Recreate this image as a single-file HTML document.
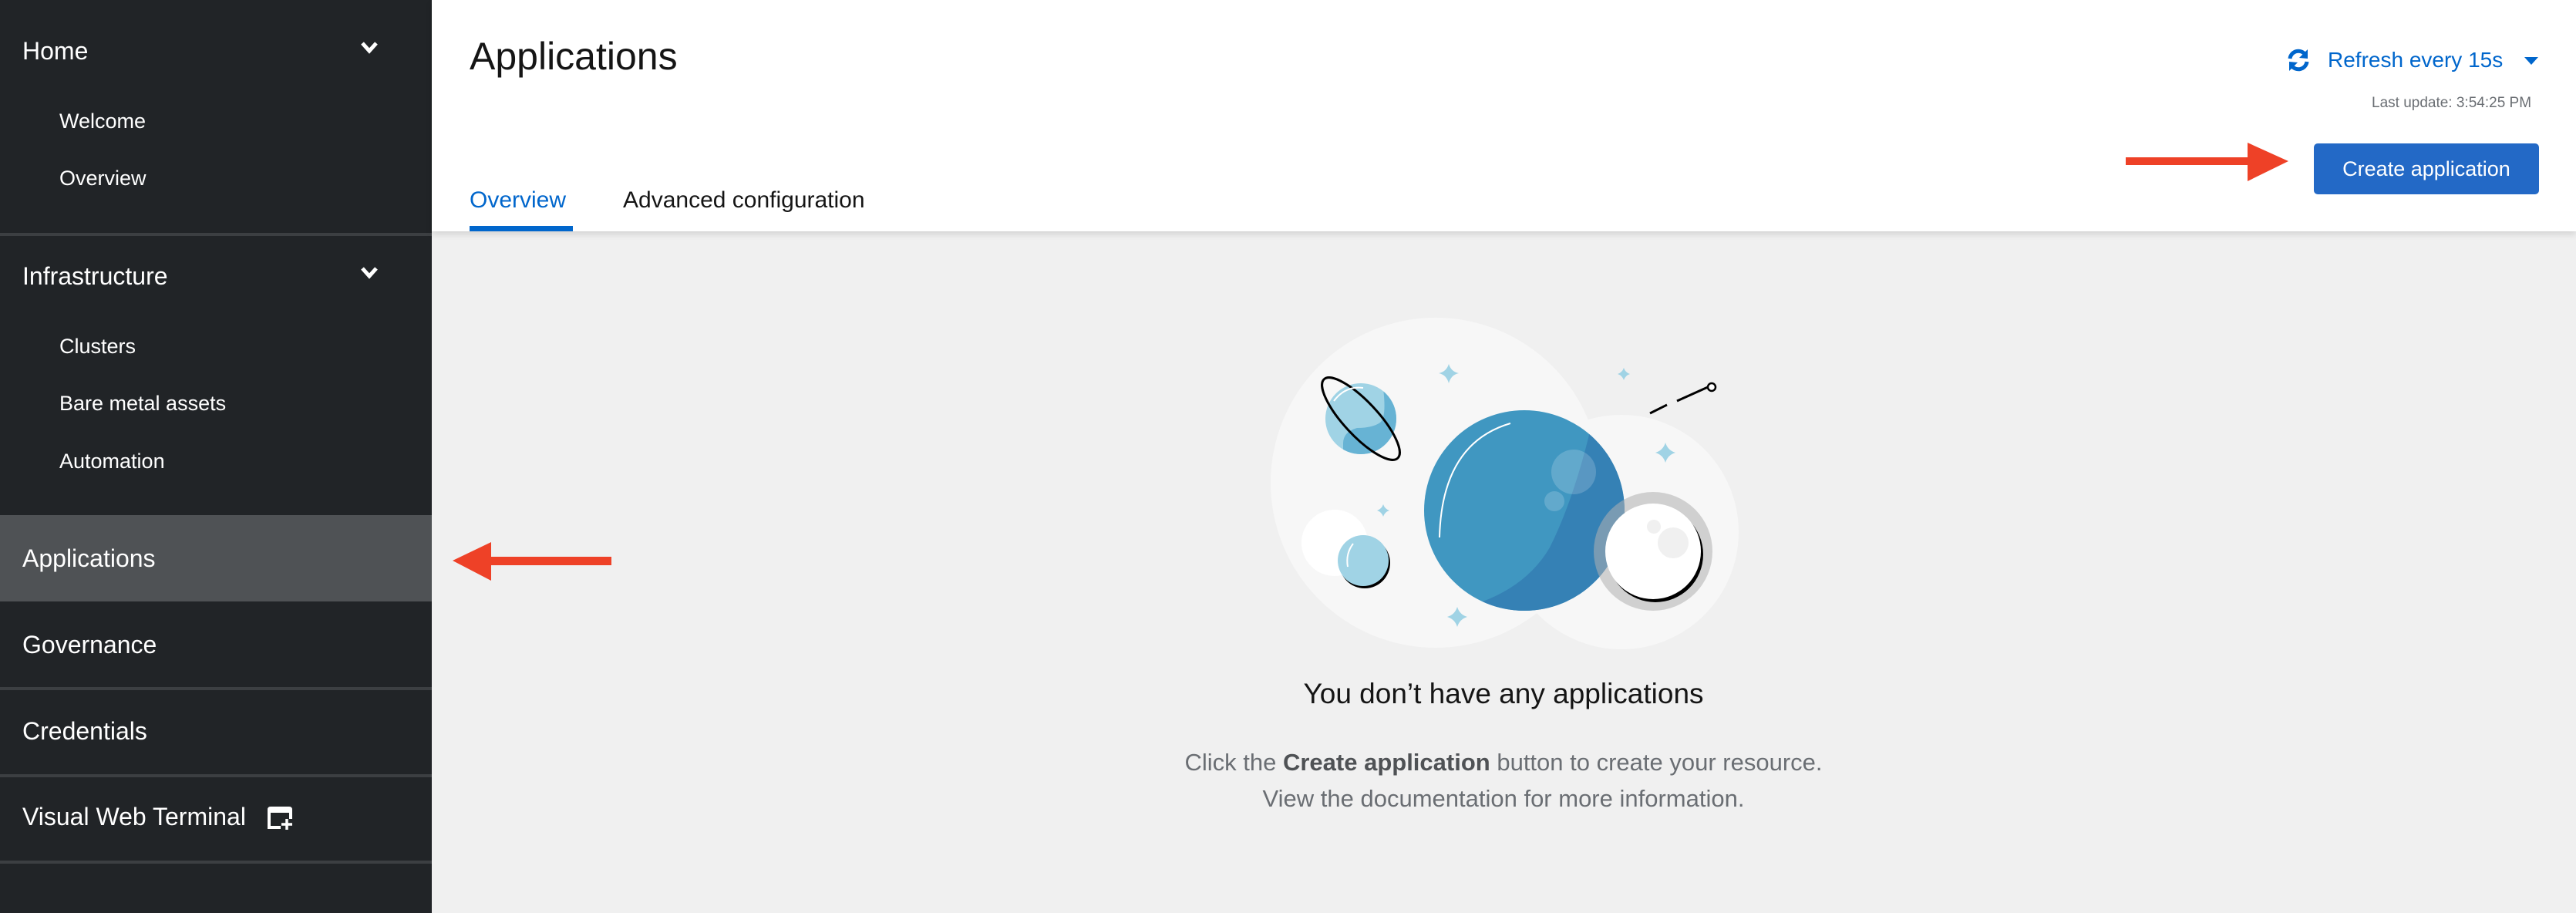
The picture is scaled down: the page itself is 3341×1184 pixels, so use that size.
<!DOCTYPE html>
<html><head><meta charset="utf-8"><style>
*{margin:0;padding:0;box-sizing:border-box}
body{width:3341px;height:1184px;overflow:hidden;background:#f0f0f0;font-family:"Liberation Sans",sans-serif;position:relative}
.sb{position:absolute;left:0;top:0;width:560px;height:1184px;background:#212427;color:#fff}
.t{position:absolute;white-space:nowrap;line-height:1}
.div{position:absolute;left:0;width:560px;height:4px;background:#3c3f42}
.hdr{position:absolute;left:560px;top:0;width:2781px;height:300px;background:#fff;box-shadow:0 4px 8px rgba(0,0,0,.12)}
</style></head><body>
<div class="sb">
  <div class="t" style="left:29px;top:50px;font-size:32px">Home</div>
  <svg style="position:absolute;left:467px;top:52px" width="24" height="20" viewBox="0 0 24 20"><path d="M3 4 L12 14 L21 4" stroke="#fff" stroke-width="5" fill="none"/></svg>
  <div class="t" style="left:77px;top:144px;font-size:27px">Welcome</div>
  <div class="t" style="left:77px;top:218px;font-size:27px">Overview</div>
  <div class="div" style="top:302px"></div>
  <div class="t" style="left:29px;top:342px;font-size:32px">Infrastructure</div>
  <svg style="position:absolute;left:467px;top:344px" width="24" height="20" viewBox="0 0 24 20"><path d="M3 4 L12 14 L21 4" stroke="#fff" stroke-width="5" fill="none"/></svg>
  <div class="t" style="left:77px;top:436px;font-size:27px">Clusters</div>
  <div class="t" style="left:77px;top:510px;font-size:27px">Bare metal assets</div>
  <div class="t" style="left:77px;top:585px;font-size:27px">Automation</div>
  <div style="position:absolute;left:0;top:668px;width:560px;height:112px;background:#4f5255"></div>
  <div class="t" style="left:29px;top:708px;font-size:32px">Applications</div>
  <div class="t" style="left:29px;top:820px;font-size:32px">Governance</div>
  <div class="div" style="top:891px"></div>
  <div class="t" style="left:29px;top:932px;font-size:32px">Credentials</div>
  <div class="div" style="top:1004px"></div>
  <div class="t" style="left:29px;top:1043px;font-size:32px">Visual Web Terminal</div>
  <svg style="position:absolute;left:346px;top:1046px" width="34" height="30" viewBox="0 0 34 30"><path d="M3 14 V4 Q3 2 5 2 H29 Q31 2 31 4 V16" stroke="#fff" stroke-width="4" fill="none"/><rect x="3" y="2" width="28" height="6" fill="#fff"/><path d="M3 12 V27 H18" stroke="#fff" stroke-width="4" fill="none"/><path d="M26 16 V30 M19 23 H33" stroke="#fff" stroke-width="3.5"/></svg>
  <div class="div" style="top:1116px"></div>
</div>
<svg style="position:absolute;left:585px;top:700px" width="210" height="56"><rect x="50" y="22" width="158" height="11" fill="#ee4127"/><polygon points="2,27 52,3 52,53" fill="#ee4127"/></svg>
<div class="hdr">
  <div class="t" style="left:49px;top:48px;font-size:50px;color:#151515">Applications</div>
  <div class="t" style="left:49px;top:245px;font-size:30px;color:#0066cc">Overview</div>
  <div style="position:absolute;left:49px;top:293px;width:134px;height:7px;background:#0066cc"></div>
  <div class="t" style="left:248px;top:245px;font-size:30px;color:#151515">Advanced configuration</div>
  <svg style="position:absolute;left:2405px;top:62px" width="32" height="32" viewBox="0 0 32 32"><path d="M5 14 A11 11 0 0 1 25 9" stroke="#0066cc" stroke-width="5" fill="none"/><polygon points="28,2 28,14 17,13" fill="#0066cc"/><path d="M27 18 A11 11 0 0 1 7 23" stroke="#0066cc" stroke-width="5" fill="none"/><polygon points="4,30 4,18 15,19" fill="#0066cc"/></svg>
  <div class="t" style="left:2459px;top:64px;font-size:28px;color:#0066cc">Refresh every 15s</div>
  <svg style="position:absolute;left:2713px;top:72px" width="20" height="14"><polygon points="1,2 19,2 10,12" fill="#0066cc"/></svg>
  <div class="t" style="left:2516px;top:124px;font-size:19px;color:#6a6e73">Last update: 3:54:25 PM</div>
  <svg style="position:absolute;left:2195px;top:184px" width="215" height="52"><rect x="2" y="20" width="160" height="10" fill="#ee4127"/><polygon points="160,1 213,25 160,51" fill="#ee4127"/></svg>
  <div style="position:absolute;left:2441px;top:186px;width:292px;height:66px;background:#2369c6;border-radius:5px;color:#fff;font-size:27px;line-height:66px;text-align:center">Create application</div>
</div>
<svg style="position:absolute;left:1600px;top:380px" width="700" height="480" viewBox="1600 380 700 480">
  <defs><clipPath id="pc"><circle cx="1977" cy="662" r="130"/></clipPath><clipPath id="sc"><circle cx="1765" cy="543" r="46"/></clipPath></defs>
  <circle cx="1862" cy="626" r="214" fill="#f7f7f7"/>
  <circle cx="2103" cy="690" r="152" fill="#f7f7f7"/>
  <circle cx="1731" cy="704" r="43" fill="#fff"/>
  <circle cx="1770" cy="730" r="33" fill="#000"/>
  <circle cx="1768" cy="727" r="33" fill="#a0d3e5"/>
  <path d="M1755 705 Q1745 718 1748 735" stroke="#fff" stroke-width="2" fill="none"/>
  <circle cx="1765" cy="543" r="46" fill="#a0d3e5"/>
  <path clip-path="url(#sc)" d="M1792 490 Q1800 540 1790 548 Q1780 555 1760 555 Q1742 560 1742 575 L1742 600 L1830 600 L1830 490Z" fill="#67b3d4"/>
  <ellipse cx="1765" cy="543" rx="70" ry="22" transform="rotate(47 1765 543)" fill="none" stroke="#000" stroke-width="3"/>
  <path d="M1730 520 Q1745 500 1768 503" stroke="#fff" stroke-width="2" fill="none"/>
  <circle cx="1977" cy="662" r="130" fill="#4097c1"/>
  <path clip-path="url(#sc2)" d="" />
  <g clip-path="url(#pc)"><path d="M2062 560 Q2040 650 2010 710 Q1975 770 1890 790 L1880 830 L2120 830 L2120 540Z" fill="#3581b5"/></g>
  <circle cx="2041" cy="612" r="29" fill="#fff" opacity=".18"/>
  <circle cx="2016" cy="650" r="13" fill="#fff" opacity=".18"/>
  <path d="M1959 549 Q1870 575 1867 697" stroke="#fff" stroke-width="2" fill="none"/>
  <circle cx="2144" cy="715" r="77" fill="#b0b0b0" opacity=".55"/>
  <circle cx="2147" cy="719" r="62" fill="#000"/>
  <circle cx="2144" cy="715" r="62" fill="#fff"/>
  <circle cx="2170" cy="704" r="20" fill="#f0f0f0"/>
  <circle cx="2145" cy="683" r="9" fill="#f0f0f0"/>
  <path d="M2140 536 L2162 525 M2175 520 L2215 502" stroke="#000" stroke-width="3"/>
  <circle cx="2220" cy="502" r="5" fill="#fff" stroke="#000" stroke-width="2.5"/>
  <g fill="#a0d3e5">
    <path d="M1879 472 Q1882 482 1892 484 Q1882 486 1879 497 Q1876 486 1866 484 Q1876 482 1879 472Z"/>
    <path d="M2106 477 Q2108 483 2114 485 Q2108 487 2106 493 Q2104 487 2098 485 Q2104 483 2106 477Z"/>
    <path d="M2160 574 Q2163 584 2173 587 Q2163 590 2160 600 Q2157 590 2147 587 Q2157 584 2160 574Z"/>
    <path d="M1794 654 Q1796 660 1802 662 Q1796 664 1794 670 Q1792 664 1786 662 Q1792 660 1794 654Z"/>
    <path d="M1890 787 Q1893 797 1903 800 Q1893 803 1890 813 Q1887 803 1877 800 Q1887 797 1890 787Z"/>
  </g>
</svg>
<div class="t" style="left:0;width:3900px;top:881px;font-size:37px;color:#151515;text-align:center">You don’t have any applications</div>
<div class="t" style="left:0;width:3900px;top:973px;font-size:31px;color:#6a6e73;text-align:center">Click the <b style="color:#4f5255">Create application</b> button to create your resource.</div>
<div class="t" style="left:0;width:3900px;top:1020px;font-size:31px;color:#6a6e73;text-align:center">View the documentation for more information.</div>
</body></html>
